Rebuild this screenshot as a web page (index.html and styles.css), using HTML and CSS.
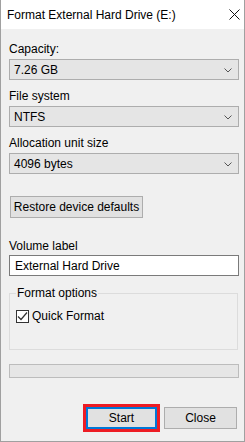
FILE: index.html
```html
<!DOCTYPE html>
<html>
<head>
	<title>Format External Hard Drive (E:)</title>
	<meta charset="utf-8">
	<link rel="stylesheet" href="styles.css">
</head>
<body>

	<div id="window">

		<div id="title-bar">
			<span class="title">Format External Hard Drive (E:)</span>
			<svg class="close-icon" width="11" height="11" viewBox="0 0 11 11">
				<path d="M0.5 0.5 L10.5 10.5 M10.5 0.5 L0.5 10.5" stroke="#111" stroke-width="1" fill="none"/>
			</svg>
		</div>

		<div id="content">

			<div class="label first">Capacity:</div>
			<div class="combo">
				<span>7.26 GB</span>
				<svg class="chevron" width="8" height="5" viewBox="0 0 8 5"><path d="M0.5 0.5 L4 4 L7.5 0.5" stroke="#555" fill="none"/></svg>
			</div>

			<div class="label">File system</div>
			<div class="combo">
				<span>NTFS</span>
				<svg class="chevron" width="8" height="5" viewBox="0 0 8 5"><path d="M0.5 0.5 L4 4 L7.5 0.5" stroke="#555" fill="none"/></svg>
			</div>

			<div class="label">Allocation unit size</div>
			<div class="combo">
				<span>4096 bytes</span>
				<svg class="chevron" width="8" height="5" viewBox="0 0 8 5"><path d="M0.5 0.5 L4 4 L7.5 0.5" stroke="#555" fill="none"/></svg>
			</div>

			<div class="button restore">Restore device defaults</div>

			<div class="label volume">Volume label</div>
			<div class="text-field">External Hard Drive</div>

			<fieldset id="format-options">
				<legend>Format options</legend>
				<div class="check-row">
					<span class="checkbox">
						<svg width="11" height="11" viewBox="0 0 11 11"><path d="M1 5.5 L4 8.5 L10 1.5" stroke="#333" stroke-width="1.2" fill="none"/></svg>
					</span>
					<span>Quick Format</span>
				</div>
			</fieldset>

			<div class="progress"></div>

			<div class="button-row">
				<div class="highlight">
					<div class="button start">Start</div>
				</div>
				<div class="button close">Close</div>
			</div>

		</div>

	</div>

</body>
</html>
```

FILE: styles.css
```css
* {
	margin: 0;
	padding: 0;
	box-sizing: border-box;
}

body {
	font-family: "Liberation Sans", Arial, sans-serif;
	font-size: 12px;
	color: #000;
	background: #fff;
}

#window {
	display: flex;
	flex-direction: column;
	width: 245px;
	height: 442px;
	border: 1px solid #a0a0a0;
	border-top: none;
	background-color: #f0f0f0;
}

	#title-bar {
		display: flex;
		align-items: center;
		justify-content: space-between;
		height: 29px;
		padding: 0 4px 0 6px;
		background-color: #fff;
		font-size: 12px;
	}

		.close-icon {
			margin-top: -1px;
		}

	#content {
		flex: 1;
		padding: 0 5px 0 8px;
	}

		.label {
			line-height: 15px;
			margin-top: 9px;
		}

		.label.first {
			margin-top: 13px;
		}

		.combo {
			display: flex;
			align-items: center;
			justify-content: space-between;
			height: 21px;
			margin-top: 2px;
			padding: 0 6px 0 4px;
			border: 1px solid #adadad;
			background-color: #e5e5e5;
		}

		.combo .chevron {
			margin-top: 1px;
		}

		.button {
			display: flex;
			align-items: center;
			justify-content: center;
			height: 22px;
			border: 1px solid #adadad;
			background-color: #e1e1e1;
		}

		.restore {
			width: 133px;
			margin: 22px 0 0 1px;
		}

		.label.volume {
			margin-top: 21px;
		}

		.text-field {
			display: flex;
			align-items: center;
			height: 21px;
			margin-top: 1px;
			padding-left: 5px;
			border: 1px solid #7a7a7a;
			background-color: #fff;
		}

		#format-options {
			margin: 10px 1px 0 0;
			padding: 0 6px 26px 6px;
			border: 1px solid #dcdcdc;
		}

			#format-options legend {
				padding: 0 1px;
				line-height: 15px;
			}

			.check-row {
				display: flex;
				align-items: center;
				gap: 3px;
				margin-top: 8px;
			}

				.checkbox {
					display: flex;
					align-items: center;
					justify-content: center;
					width: 13px;
					height: 13px;
					border: 1px solid #333;
					background-color: #fff;
				}

		.progress {
			height: 14px;
			margin-top: 14px;
			border: 1px solid #bcbcbc;
			background-color: #e6e6e6;
		}

		.button-row {
			display: flex;
			justify-content: flex-end;
			align-items: center;
			gap: 4px;
			margin-top: 26px;
			padding-right: 2px;
		}

			.highlight {
				padding: 3px;
				background-color: #ed1c24;
			}

			.start {
				width: 71px;
				border: 2px solid #0078d7;
			}

			.close {
				width: 73px;
			}
```
